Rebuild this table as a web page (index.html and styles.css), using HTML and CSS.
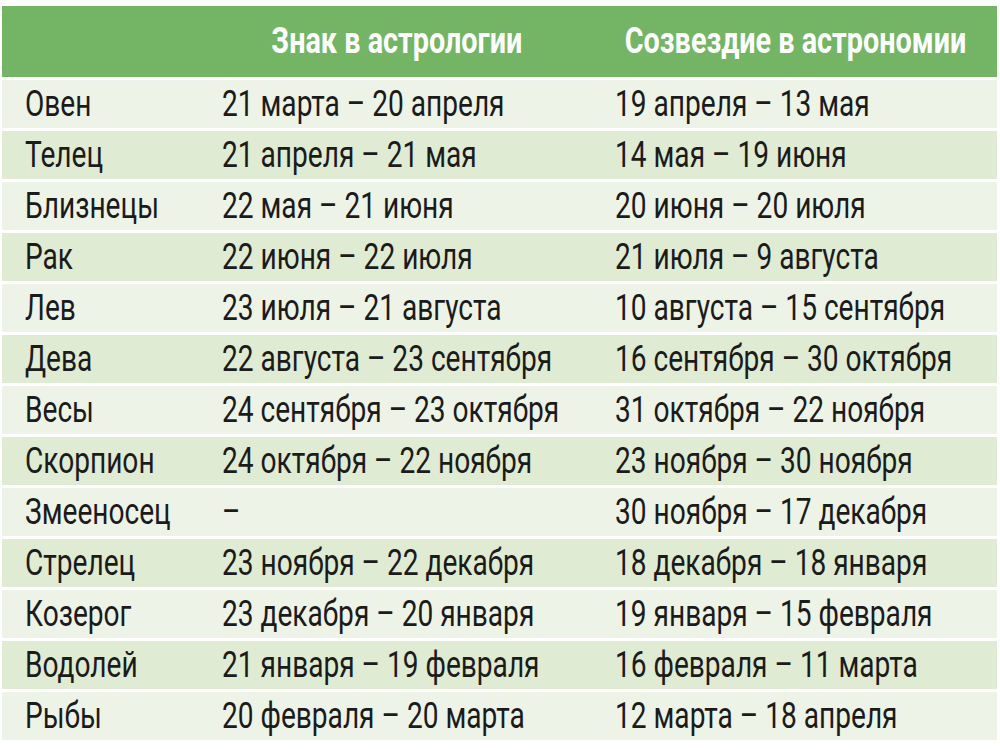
FILE: index.html
```html
<!DOCTYPE html>
<html lang="ru">
<head>
<meta charset="utf-8">
<title>Знаки зодиака</title>
<link rel="stylesheet" href="styles.css">
</head>
<body>
<div class="zodiac">
  <div class="row head">
    <div class="cell"></div>
    <div class="cell"><span class="t">Знак в астрологии</span></div>
    <div class="cell"><span class="t">Созвездие в астрономии</span></div>
  </div>
  <div class="row odd"><div class="cell"><span class="t">Овен</span></div><div class="cell"><span class="t">21 марта – 20 апреля</span></div><div class="cell"><span class="t">19 апреля – 13 мая</span></div></div>
  <div class="row even"><div class="cell"><span class="t">Телец</span></div><div class="cell"><span class="t">21 апреля – 21 мая</span></div><div class="cell"><span class="t">14 мая – 19 июня</span></div></div>
  <div class="row odd"><div class="cell"><span class="t">Близнецы</span></div><div class="cell"><span class="t">22 мая – 21 июня</span></div><div class="cell"><span class="t">20 июня – 20 июля</span></div></div>
  <div class="row even"><div class="cell"><span class="t">Рак</span></div><div class="cell"><span class="t">22 июня – 22 июля</span></div><div class="cell"><span class="t">21 июля – 9 августа</span></div></div>
  <div class="row odd"><div class="cell"><span class="t">Лев</span></div><div class="cell"><span class="t">23 июля – 21 августа</span></div><div class="cell"><span class="t">10 августа – 15 сентября</span></div></div>
  <div class="row even"><div class="cell"><span class="t">Дева</span></div><div class="cell"><span class="t">22 августа – 23 сентября</span></div><div class="cell"><span class="t">16 сентября – 30 октября</span></div></div>
  <div class="row odd"><div class="cell"><span class="t">Весы</span></div><div class="cell"><span class="t">24 сентября – 23 октября</span></div><div class="cell"><span class="t">31 октября – 22 ноября</span></div></div>
  <div class="row even"><div class="cell"><span class="t">Скорпион</span></div><div class="cell"><span class="t">24 октября – 22 ноября</span></div><div class="cell"><span class="t">23 ноября – 30 ноября</span></div></div>
  <div class="row odd"><div class="cell"><span class="t">Змееносец</span></div><div class="cell"><span class="t">–</span></div><div class="cell"><span class="t">30 ноября – 17 декабря</span></div></div>
  <div class="row even"><div class="cell"><span class="t">Стрелец</span></div><div class="cell"><span class="t">23 ноября – 22 декабря</span></div><div class="cell"><span class="t">18 декабря – 18 января</span></div></div>
  <div class="row odd"><div class="cell"><span class="t">Козерог</span></div><div class="cell"><span class="t">23 декабря – 20 января</span></div><div class="cell"><span class="t">19 января – 15 февраля</span></div></div>
  <div class="row even"><div class="cell"><span class="t">Водолей</span></div><div class="cell"><span class="t">21 января – 19 февраля</span></div><div class="cell"><span class="t">16 февраля – 11 марта</span></div></div>
  <div class="row odd"><div class="cell"><span class="t">Рыбы</span></div><div class="cell"><span class="t">20 февраля – 20 марта</span></div><div class="cell"><span class="t">12 марта – 18 апреля</span></div></div>
</div>
</body>
</html>
```
FILE: styles.css
```css
html, body {
  margin: 0;
  padding: 0;
  background: #ffffff;
}
body {
  padding: 6px 3px 0 2px;
  font-family: Roboto, "Liberation Sans", sans-serif;
  color: #1b1b1b;
}
.zodiac {
  display: flex;
  flex-direction: column;
  gap: 3px;
}
.row {
  display: grid;
  grid-template-columns: 198px 393px minmax(0, 1fr);
  height: 48px;
  font-size: 36px;
  line-height: 48px;
  white-space: nowrap;
}
.cell {
  padding-left: 22px;
  min-width: 0;
}
.cell:first-child {
  padding-left: 23px;
}
.t {
  display: inline-block;
  transform: scaleX(0.78);
  transform-origin: left center;
}
.head {
  height: 71px;
  line-height: 71px;
  background: #73b565;
  color: #ffffff;
  font-weight: bold;
}
.head .cell {
  padding-left: 0;
  display: flex;
  justify-content: center;
}
.head .t {
  flex: none;
  transform: scaleX(0.8);
  transform-origin: center center;
}
.odd {
  background: #edf3e6;
}
.even {
  background: #dfebd2;
}
```
